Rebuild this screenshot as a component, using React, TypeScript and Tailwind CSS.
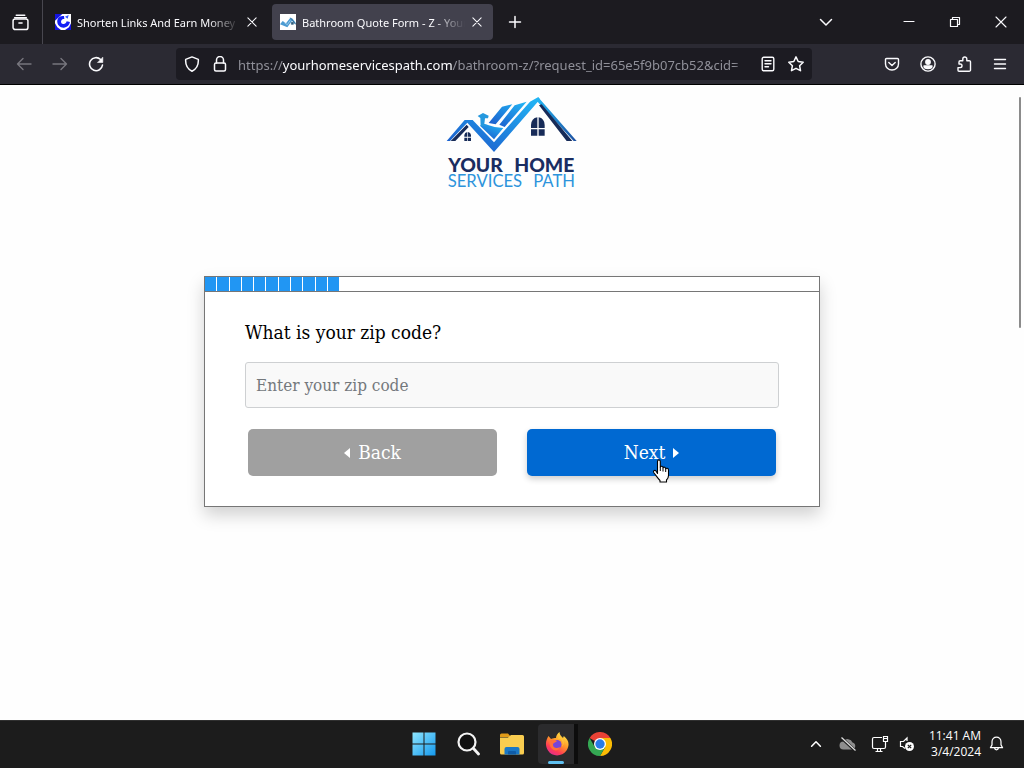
import type { ReactNode } from "react";

const chromeFont = "font-['Open_Sans','Noto_Sans',sans-serif]";
const bodyFont = "font-['DejaVu_Serif_Condensed','DejaVu_Serif','Liberation_Serif',serif]";

function Stroke({ children, size = 16, width = 1.4 }: { children: ReactNode; size?: number; width?: number }) {
  return (
    <svg
      aria-hidden="true"
      width={size}
      height={size}
      viewBox="0 0 16 16"
      fill="none"
      stroke="currentColor"
      strokeWidth={width}
      strokeLinecap="round"
      strokeLinejoin="round"
      className="shrink-0"
    >
      {children}
    </svg>
  );
}

function IconButton({ label, className = "w-9", children }: { label: string; className?: string; children: ReactNode }) {
  return (
    <button type="button" aria-label={label} className={`flex h-9 shrink-0 items-center justify-center ${className}`}>
      {children}
    </button>
  );
}

const Cross = () => (
  <Stroke size={12} width={1.4}>
    <path d="M2.5 2.5l11 11M13.5 2.5l-11 11" />
  </Stroke>
);

function Tab({ title, active, icon }: { title: string; active?: boolean; icon: ReactNode }) {
  return (
    <div
      className={`flex h-9 min-w-0 basis-[221px] items-center rounded pl-2 pr-1 ${active ? "bg-[#42414d]" : ""}`}
    >
      {icon}
      <button
        type="button"
        className="ml-1.5 min-w-0 flex-1 overflow-hidden whitespace-nowrap pt-0.5 text-left font-['Noto_Sans',sans-serif] text-[11px] leading-5 text-[#fbfbfe] [mask-image:linear-gradient(to_left,transparent,black_32px)]"
      >
        {title}
      </button>
      <IconButton label="Close tab" className="w-6">
        <Cross />
      </IconButton>
    </div>
  );
}

function TabStrip() {
  return (
    <div className="flex h-11 items-center bg-[#1c1b20]">
      <div className="flex h-full w-[43px] shrink-0 items-center justify-center border-r border-[#48474f] pr-0.5">
        <IconButton label="Recent browsing">
          <Stroke size={17} width={1.4}>
            <path d="M4 1.2h8M2.5 3.6h11" />
            <rect x="1" y="4.6" width="14" height="10" rx="2" />
            <path d="M6.5 8.4h3" />
          </Stroke>
        </IconButton>
      </div>
      <div className="flex min-w-0 flex-1 items-center gap-1 pl-1">
        <Tab
          title="Shorten Links And Earn Money"
          icon={
            <svg aria-hidden="true" width="16" height="16" viewBox="0 0 48 48" className="shrink-0">
              <path d="M0 0h48v48H0z" fill="#fff" />
              <path d="M0 0h22L12 9 0 20zM0 28l7 12 11 8H0zM48 28v20H30l12-8z" fill="#1414e0" />
              <path d="M27 6C11 4 6 15 7 25c1 10 10 17 20 16 9-1 16-7 18-17l-10-2c-2 7-6 9-11 8-6-1-8-9-3-13 2-2 4-2 7-2z" fill="#1420f5" />
              <path d="M30 8l11-5-3 11z" fill="#3355ff" />
            </svg>
          }
        />
        <Tab
          active
          title="Bathroom Quote Form - Z - Your Home"
          icon={
            <svg aria-hidden="true" width="16" height="16" viewBox="0 0 48 48" className="shrink-0">
              <path d="M0 0h48v48H0z" fill="#fff" />
              <path d="M0 31l8-10 10 7 13-17 7 3 10 14-3 3-9-11-14 20z" fill="#4c9bd2" />
              <path d="M31 11l17 21M34 25h6v6h-6z" fill="#315d7d" stroke="#315d7d" strokeWidth="2" />
              <path d="M13 26l9 6 9-13" fill="none" stroke="#b9def3" strokeWidth="2" />
            </svg>
          }
        />
        <IconButton label="New tab">
          <Stroke width={1.5}>
            <path d="M8 2.5v11M2.5 8h11" />
          </Stroke>
        </IconButton>
      </div>
      <IconButton label="List all tabs" className="mr-[42px] w-9">
        <Stroke width={1.5}>
          <path d="M2.500 5.500L8 11l5.500-5.500" />
        </Stroke>
      </IconButton>
      <IconButton label="Minimize" className="w-[46px]">
        <Stroke width={1.2}>
          <path d="M3 7.500h10" />
        </Stroke>
      </IconButton>
      <IconButton label="Restore" className="w-[46px]">
        <Stroke width={1.2}>
          <path d="M3.500 5.500h7v7h-7zM5.500 5.500v-2h7v7h-2" />
        </Stroke>
      </IconButton>
      <IconButton label="Close" className="w-[46px]">
        <Stroke width={1.1}>
          <path d="M3 3l10 10M13 3L3 13" />
        </Stroke>
      </IconButton>
    </div>
  );
}

function Toolbar() {
  return (
    <div className="flex h-[41px] items-center border-b border-black bg-[#2b2a33] pl-1.5 pr-1.5">
      <div className="flex text-[#77767e]">
        <IconButton label="Go back">
          <Stroke>
            <path d="M15 8H1.500M7 2.500L1.500 8 7 13.500" />
          </Stroke>
        </IconButton>
        <IconButton label="Go forward">
          <Stroke>
            <path d="M1 8h13.500M9 2.500L14.500 8 9 13.500" />
          </Stroke>
        </IconButton>
      </div>
      <IconButton label="Reload">
        <Stroke width={1.6}>
          <path d="M12.600 3.500A6.500 6.500 0 1 0 14.500 9" />
          <path d="M14.800 1.500v5h-5z" fill="currentColor" strokeWidth={0.6} />
        </Stroke>
      </IconButton>
      <div className="ml-[62px] mr-[62px] flex h-8 min-w-0 flex-1 items-center rounded bg-[#1c1b22] pl-0.5 pr-0.5">
        <IconButton label="Tracking protection" className="w-7">
          <Stroke width={1.5}>
            <path d="M8 .9l6.300 2.500c.4 5.300-1.600 9.600-6.300 11.800C3.300 13 1.300 8.700 1.700 3.400z" />
          </Stroke>
        </IconButton>
        <IconButton label="Connection secure" className="w-7">
          <Stroke width={1.5}>
            <rect x="2.500" y="7" width="11" height="8" rx="1.500" />
            <path d="M4.500 7V4a3.500 3.500 0 0 1 7 0v3" />
          </Stroke>
        </IconButton>
        <div
          role="textbox"
          aria-label="Address"
          className="ml-1 mr-2 min-w-0 flex-1 overflow-hidden whitespace-nowrap pt-0.5 font-['Noto_Sans',sans-serif] text-[13px] leading-6 text-[#8f8f98] [mask-image:linear-gradient(to_left,transparent,black_12px)]"
        >
          https://<span className="text-[#fbfbfe]">yourhomeservicespath.com</span>
          /bathroom-z/?request_id=65e5f9b07cb52&amp;cid=
        </div>
        <IconButton label="Reader view" className="w-7">
          <Stroke width={1.4}>
            <rect x="2.200" y="1.200" width="11.600" height="13.600" rx="1.500" />
            <path d="M5 4.700h6M5 7.700h6M5 10.700h3.500" />
          </Stroke>
        </IconButton>
        <IconButton label="Bookmark this page" className="w-7">
          <Stroke width={1.5}>
            <path d="M8 .9l2.200 4.600 5 .7-3.600 3.500.9 5L8 12.300l-4.500 2.400.9-5L.8 6.200l5-.7z" />
          </Stroke>
        </IconButton>
      </div>
      <IconButton label="Save to Pocket">
        <Stroke width={1.4}>
          <path d="M2.500 2.500h11a1 1 0 0 1 1 1v4.500a6.500 6 0 0 1-13 0V3.500a1 1 0 0 1 1-1z" />
          <path d="M4.800 6.500L8 9.600l3.200-3.100" />
        </Stroke>
      </IconButton>
      <IconButton label="Account">
        <Stroke width={1.4}>
          <circle cx="8" cy="8" r="7.100" />
          <circle cx="8" cy="6" r="2.200" fill="currentColor" />
          <path d="M4 10h8c0 1.700-2 2.500-4 2.500S4 11.700 4 10z" fill="currentColor" />
        </Stroke>
      </IconButton>
      <IconButton label="Extensions">
        <Stroke width={1.4}>
          <path d="M3 15.200h10.200a1.300 1.300 0 0 0 1.300-1.300V6a1.300 1.300 0 0 0-1.300-1.300h-2.400V3a2 2 0 0 0-4 0v1.700H4.300A1.300 1.300 0 0 0 3 6v2h1.200a1.800 1.800 0 0 1 0 3.600H2v2.600a1 1 0 0 0 1 1z" />
        </Stroke>
      </IconButton>
      <IconButton label="Open application menu">
        <Stroke width={1.4}>
          <path d="M2.500 3.500h11M2.500 8h11M2.500 12.500h11" />
        </Stroke>
      </IconButton>
    </div>
  );
}

function Logo() {
  return (
    <svg
      role="img"
      aria-label="Your Home Services Path"
      width="134"
      height="94"
      viewBox="45 20 402 282"
      className="overflow-visible"
    >
      <defs>
        <linearGradient id="roof" x1="1" y1="0" x2="0.300" y2="1">
          <stop offset="0" stopColor="#22b8f6" />
          <stop offset="1" stopColor="#1c62cf" />
        </linearGradient>
        <linearGradient id="eave" x1="0" y1="0" x2="1" y2="1">
          <stop offset="0" stopColor="#22b8f6" />
          <stop offset="1" stopColor="#1d4fa0" />
        </linearGradient>
      </defs>
      <path d="M50 158L104 95h24l64 67L300 40l25-14 5 7L192 191 112 103 60 158z" fill="url(#roof)" />
      <path d="M316 34l10-6 114 130h-9L324 42z" fill="url(#eave)" />
      <path d="M62 158l48-49 6 7-40 42zM327 51l8-3 92 110h-17z" fill="#172b58" />
      <path d="M176 104l40-49 31-7-50 60zM208 109l46-58 36-11-66 76z" fill="url(#roof)" />
      <path d="M150 112q10-9 24-2 22 9 46 9l-28 34z" fill="url(#roof)" />
      <path d="M143 83l16-9 17 8-2 8-9 0-2 17 9 6-20 0-1-24z" fill="#2498de" />
      <path d="M103 145v-5q1-8 9-9v14zm11 0v-14q8 1 9 9v5zm-11 3h9v10h-9zm11 0h9v10h-9z" fill="#172b58" />
      <path d="M303 119v-9q1-20 19-23v32zm23 0V87q17 3 18 23v9zm-23 4h19v19h-19zm23 0h18v19h-18z" fill="#172b58" />
      <g fill="#1a2d61" fontFamily="Lato, sans-serif" fontSize="58" fontWeight="900">
        <text x="55" y="250">YOUR</text>
        <text x="433" y="250" textAnchor="end">HOME</text>
      </g>
      <g fill="#2d94dc" fontFamily="Lato, sans-serif" fontSize="50">
        <text x="53" y="296">SERVICES</text>
        <text x="435" y="296" textAnchor="end">PATH</text>
      </g>
    </svg>
  );
}

function Pointer() {
  return (
    <svg
      aria-hidden="true"
      width="18"
      height="24"
      viewBox="0 0 18 24"
      className="pointer-events-none absolute left-1/2 top-[30px]"
    >
      <path
        d="M5.500 14.500V2.500C5.500.3 8.300.3 8.300 2.500V8c.6-1.200 2.700-.9 2.700.8.6-1.200 2.700-.8 2.700 1 .8-1 2.800-.6 2.800 1.200v5.500c0 2-1 3.500-2 4.500v2H8v-1.500c-2-2-4-5-6-7.500-1.500-2 .7-3.500 2-2z"
        fill="#fff"
        stroke="#000"
        strokeWidth="1.100"
        strokeLinejoin="round"
      />
      <path d="M8.300 8v4M11 9v3.500M13.700 10v3" stroke="#000" strokeWidth="1" />
    </svg>
  );
}

function QuoteForm() {
  const segments = Array.from({ length: 11 }, (_, i) => i);
  return (
    <form
      onSubmit={(e) => e.preventDefault()}
      className={`mx-auto w-full max-w-[616px] border border-[#767676] bg-white shadow-[0_8px_16px_rgba(0,0,0,0.18)] ${bodyFont}`}
    >
      <div
        role="progressbar"
        aria-label="Form progress"
        aria-valuenow={22}
        aria-valuemin={0}
        aria-valuemax={100}
        className="h-[15px] border-b border-[#767676]"
      >
        <div className="flex h-full w-[22%]">
          {segments.map((n) => (
            <span key={n} className="flex-1 border-r border-white bg-[#2196f3]" />
          ))}
        </div>
      </div>
      <div className="px-10 pb-[30px] pt-7">
        <label htmlFor="zip" className="block text-[19px] leading-6 text-black">
          What is your zip code?
        </label>
        <input
          id="zip"
          type="text"
          placeholder="Enter your zip code"
          className="mt-[18px] block h-[46px] w-full rounded-[3px] border border-[#ced0d2] bg-[#f9f9f9] px-2.5 text-[17px] text-black placeholder:text-[#74787c]"
        />
        <div className="mt-[21px] grid grid-cols-2 gap-[30px] px-[3px] text-[19px] text-white">
          <button type="button" className="flex h-[47px] items-center justify-center gap-2 rounded-[5px] bg-[#a0a0a0]">
            <svg aria-hidden="true" width="6" height="10" viewBox="0 0 6 10" fill="currentColor">
              <path d="M6 0v10L0 5z" />
            </svg>
            Back
          </button>
          <div className="relative grid">
            <button
              type="submit"
              className="flex h-[47px] items-center justify-center gap-2 rounded-[5px] bg-[#0069d2] shadow-[0_3px_6px_rgba(0,0,0,0.2)]"
            >
              Next
              <svg aria-hidden="true" width="6" height="10" viewBox="0 0 6 10" fill="currentColor">
                <path d="M0 0v10l6-5z" />
              </svg>
            </button>
            <Pointer />
          </div>
        </div>
      </div>
    </form>
  );
}

function TaskButton({ label, active, children }: { label: string; active?: boolean; children: ReactNode }) {
  return (
    <button
      type="button"
      aria-label={label}
      className={`relative flex h-10 items-center justify-center ${
        active ? "ml-1 w-10 rounded-l border-r-4 border-[#0d0d0d] bg-[#2b2b2d] pl-0.5" : "w-11"
      }`}
    >
      {children}
      {active && <span className="absolute bottom-0 left-1/2 h-[3px] w-4 -translate-x-1/2 rounded bg-[#5fc0f0]" />}
    </button>
  );
}

function Taskbar() {
  return (
    <footer className="grid h-12 grid-cols-[1fr_auto_1fr] items-center border-t border-[#303030] bg-[#1c1c1c] pb-0.5 text-white">
      <div />
      <div className="flex items-center">
        <TaskButton label="Start">
          <svg aria-hidden="true" width="24" height="24" viewBox="0 0 24 24">
            <defs>
              <linearGradient id="win" x1="0" y1="0" x2="1" y2="1">
                <stop offset="0" stopColor="#8ee6ff" />
                <stop offset="1" stopColor="#1499ee" />
              </linearGradient>
            </defs>
            <path d="M.5.500h11v11H.500zM12.500.500h11v11h-11zM.500 12.500h11v11H.500zM12.500 12.500h11v11h-11z" fill="url(#win)" />
          </svg>
        </TaskButton>
        <TaskButton label="Search">
          <svg aria-hidden="true" width="24" height="24" viewBox="0 0 24 24" fill="none" stroke="#f3f3f3">
            <circle cx="11" cy="10" r="8.500" strokeWidth="2.200" fill="#111" />
            <path d="M17.500 16.500l5 5.500" strokeWidth="2.800" strokeLinecap="round" />
          </svg>
        </TaskButton>
        <TaskButton label="File Explorer">
          <svg aria-hidden="true" width="26" height="24" viewBox="0 0 26 24">
            <path d="M1 3q0-1.500 1.500-1.500H9L12 5H1z" fill="#e09a18" />
            <path d="M1 5.500h8L12 3h11.500Q25 3 25 4.500V21q0 1.500-1.500 1.500h-21Q1 22.500 1 21z" fill="#f9cd50" />
            <path d="M5.500 22.500V17q0-2 2-2h11q2 0 2 2v5.500z" fill="#1a78c6" />
            <path d="M9 22.500V20q0-1 1-1h6q1 0 1 1v2.500z" fill="#0f5ca8" />
          </svg>
        </TaskButton>
        <TaskButton label="Firefox" active>
          <svg aria-hidden="true" width="24" height="24" viewBox="0 0 24 24">
            <defs>
              <linearGradient id="fox" x1="0.800" y1="0" x2="0.200" y2="1">
                <stop offset="0" stopColor="#fff04a" />
                <stop offset="0.450" stopColor="#ff9428" />
                <stop offset="0.750" stopColor="#ff3b55" />
                <stop offset="1" stopColor="#dc2b9a" />
              </linearGradient>
            </defs>
            <path d="M3.500 4l2.500 3C8 6 9.500 6 11 6c0-2.500 1.500-4.500 3.500-6 0 3 2 4 3.500 6l.8-2C24 8 25 13 21.500 18.500 17 25 7 25 3 18.500-.5 13 1 8 3.500 4z" fill="url(#fox)" />
            <circle cx="12" cy="12.500" r="4.500" fill="#7645d8" />
            <path d="M4.500 9c3-2 5-1 7.500 0-1 2-4 1-4 4 0 3 4 4 7 2-2 6-11 4-10.500-6z" fill="#ff7139" />
            <path d="M13 7c4-1 6 3 4 8 3-4 2-9-3-11z" fill="#ffc53a" />
          </svg>
        </TaskButton>
        <TaskButton label="Chrome">
          <svg aria-hidden="true" width="24" height="24" viewBox="0 0 24 24">
            <path d="M12 12L1.600 6A12 12 0 0 1 22.400 6z" fill="#e94235" />
            <path d="M12 12V6h10.400A12 12 0 0 1 12 24l5.200-9z" fill="#fbbc04" />
            <path d="M1.600 6A12 12 0 0 0 12 24l5.200-9H6.800z" fill="#34a853" />
            <circle cx="12" cy="12" r="6" fill="#fff" />
            <circle cx="12" cy="12" r="4.700" fill="#287be8" />
          </svg>
        </TaskButton>
      </div>
      <div className="flex items-center justify-end pr-5">
        <button type="button" aria-label="Show hidden icons" className="mr-4">
          <Stroke size={14} width={1.8}>
            <path d="M3 10.500l5-5 5 5" />
          </Stroke>
        </button>
        <div className="mr-3.5 flex items-center gap-2.5">
          <svg aria-hidden="true" width="18" height="16" viewBox="0 0 18 16" className="mr-1">
            <path d="M4.500 13.500a4 4 0 0 1 0-8 5 5 0 0 1 9 1 3.600 3.600 0 0 1 0 7z" fill="#8d8d8d" />
            <path d="M2 1.500l14 13" stroke="#1c1c1c" strokeWidth="3" />
            <path d="M2.500 1.500l14 13" stroke="#e2e2e2" strokeWidth="1.200" />
          </svg>
          <svg aria-hidden="true" width="18" height="18" viewBox="0 0 18 18" fill="none" stroke="currentColor" strokeWidth="1.200">
            <path d="M11 2.500H3A1.500 1.500 0 0 0 1.500 4v8A1.500 1.500 0 0 0 3 13.500h10a1.500 1.500 0 0 0 1.500-1.500V9M4.500 16.500h7M6.500 13.500v3M9.500 13.500v3" />
            <path d="M12.500 1.500h4v5h-4zM14.500 6.500v3M12.500 3.500h4" />
          </svg>
          <svg aria-hidden="true" width="16" height="16" viewBox="0 0 16 16" fill="none" stroke="currentColor" strokeWidth="1.200">
            <path d="M8 5V2L4.500 5.500h-3v5h2l2.500 2" />
            <circle cx="10.500" cy="10.500" r="4.500" fill="currentColor" stroke="none" />
            <path d="M8.800 8.800l3.400 3.400M12.200 8.800l-3.400 3.400" stroke="#1c1c1c" />
          </svg>
        </div>
        <div className="mr-2 text-right text-xs leading-4">
          <div>11:41 AM</div>
          <div>3/4/2024</div>
        </div>
        <button type="button" aria-label="Notifications">
          <Stroke size={15} width={1.300}>
            <path d="M8 1.200a4.800 4.800 0 0 0-4.800 4.800v3.500L1.500 12.500h13l-1.700-3V6A4.800 4.800 0 0 0 8 1.200zM6 13c.3 2.300 3.700 2.300 4 0" />
          </Stroke>
        </button>
      </div>
    </footer>
  );
}

export default function App() {
  return (
    <div className={`flex min-h-screen flex-col bg-[#fefefe] ${chromeFont}`}>
      <header className="text-[#fbfbfe]">
        <TabStrip />
        <Toolbar />
      </header>
      <main className="relative flex-1 px-4 pt-2.5">
        <div className="mb-[87px] flex justify-center">
          <Logo />
        </div>
        <QuoteForm />
        <span className="absolute right-[3px] top-3 h-[231px] w-0.5 rounded bg-[#8b8b8b]" />
      </main>
      <Taskbar />
    </div>
  );
}
